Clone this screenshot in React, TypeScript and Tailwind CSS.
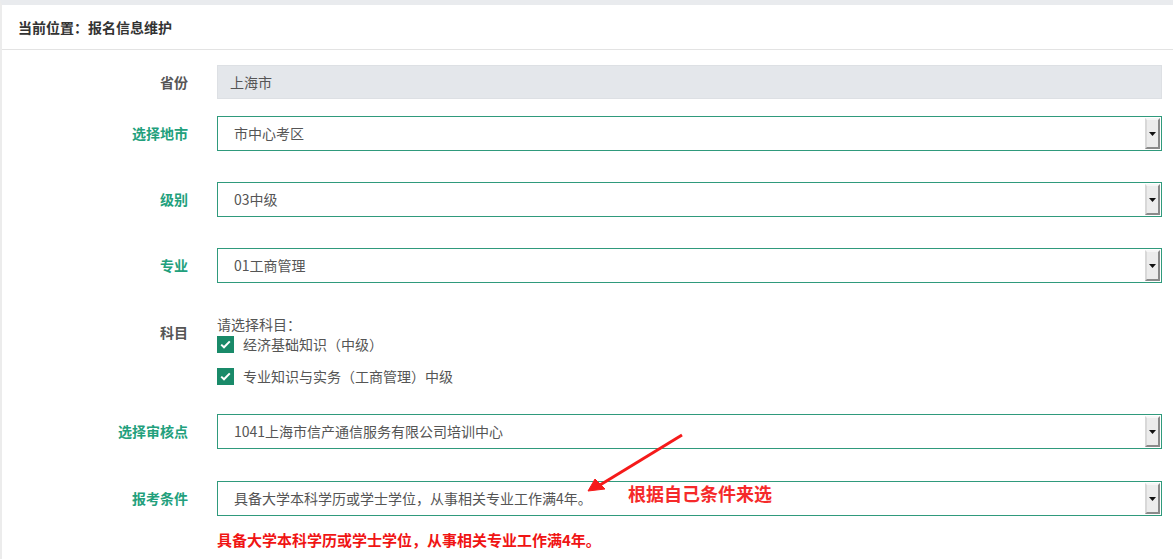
import React from 'react'

const font = { fontFamily: '"Noto Sans CJK SC", "Noto Sans", sans-serif' }

function Label({ text, green }: { text: string; green?: boolean }) {
  return (
    <div
      className={`w-[186px] shrink-0 text-right text-[14px] font-bold ${
        green ? 'text-[#22a07c]' : 'text-[#555]'
      }`}
    >
      {text}
    </div>
  )
}

function Select({ value }: { value: string }) {
  return (
    <div className="flex-1 h-[35px] border border-[#2f9a7c] bg-white flex items-stretch">
      <div className="flex-1 flex items-center pl-[16px] text-[14px] text-[#555]">{value}</div>
      <div className="w-[15px] my-[1px] mr-[1px] bg-[#ececec] border-l-2 border-t-2 border-l-[#d8d8d8] border-t-[#f6f6f6] border-r-2 border-b-2 border-r-[#8a8a8a] border-b-[#8a8a8a] flex items-center justify-center">
        <svg width="7" height="4" viewBox="0 0 7 4">
          <path d="M0 0H7L3.5 4Z" fill="#111" />
        </svg>
      </div>
    </div>
  )
}

function Check({ text }: { text: string }) {
  return (
    <div className="flex items-center gap-[9px] h-[17px]">
      <div className="w-[17px] h-[17px] bg-[#198a69] flex items-center justify-center">
        <svg width="11" height="9" viewBox="0 0 11 9">
          <path d="M1.2 4.6L4 7.3L9.8 1.4" stroke="#fff" strokeWidth="2" fill="none" />
        </svg>
      </div>
      <span className="text-[14px] text-[#555]">{text}</span>
    </div>
  )
}

export default function App() {
  return (
    <div
      style={font}
      className="relative w-full h-[559px] bg-white border-t-[5px] border-t-[#e9ebee] border-l-2 border-l-[#ececec] overflow-hidden"
    >
      {/* Header */}
      <div className="h-[45px] flex items-center pl-[16px] border-b border-[#e3e3e3] text-[14px] font-bold text-[#333]">
        当前位置：报名信息维护
      </div>

      <div className="pt-[15px] pr-[11px]">
        {/* 省份 */}
        <div className="flex items-center gap-[29px]">
          <Label text="省份" />
          <div className="flex-1 h-[34px] bg-[#e4e7eb] border border-[#dde0e4] flex items-center pl-[12px] text-[14px] text-[#555]">
            上海市
          </div>
        </div>

        <div className="flex items-center gap-[29px] mt-[17px]">
          <Label text="选择地市" green />
          <Select value="市中心考区" />
        </div>

        <div className="flex items-center gap-[29px] mt-[31px]">
          <Label text="级别" green />
          <Select value="03中级" />
        </div>

        <div className="flex items-center gap-[29px] mt-[31px]">
          <Label text="专业" green />
          <Select value="01工商管理" />
        </div>

        {/* 科目 */}
        <div className="flex items-start gap-[29px] mt-[31px]">
          <div className="pt-[8px]">
            <Label text="科目" />
          </div>
          <div className="flex-1 flex flex-col">
            <div className="text-[14px] text-[#555] leading-[20px]">请选择科目：</div>
            <div className="mt-[2px]">
              <Check text="经济基础知识（中级）" />
            </div>
            <div className="mt-[15px]">
              <Check text="专业知识与实务（工商管理）中级" />
            </div>
          </div>
        </div>

        <div className="flex items-center gap-[29px] mt-[29px]">
          <Label text="选择审核点" green />
          <Select value="1041上海市信产通信服务有限公司培训中心" />
        </div>

        <div className="flex items-center gap-[29px] mt-[32px]">
          <Label text="报考条件" green />
          <Select value="具备大学本科学历或学士学位，从事相关专业工作满4年。" />
        </div>

        <div className="flex gap-[29px] mt-[13px]">
          <div className="w-[186px] shrink-0" />
          <div className="text-[15px] font-bold text-[#f01414] leading-[22px]">
            具备大学本科学历或学士学位，从事相关专业工作满4年。
          </div>
        </div>
      </div>

      {/* annotation */}
      <svg className="absolute left-0 top-0 pointer-events-none" width="1173" height="559">
        <line x1="680" y1="430" x2="598" y2="480" stroke="#f51a1a" strokeWidth="3" />
        <path d="M586 486L593 474L603 484Z" fill="#f51a1a" stroke="#f51a1a" strokeWidth="1" />
      </svg>
      <div className="absolute left-[626px] top-[476px] text-[18px] font-bold text-[#f52a2a] leading-[24px]">
        根据自己条件来选
      </div>
    </div>
  )
}
